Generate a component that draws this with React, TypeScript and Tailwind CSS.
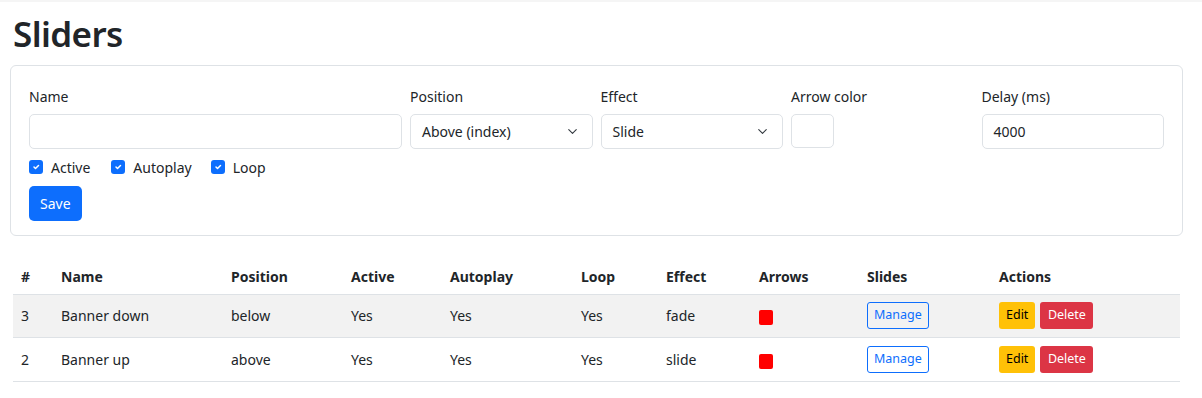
import { ChevronDown } from "lucide-react";

const rows = [
  { id: 3, name: "Banner down", position: "below", effect: "fade" },
  { id: 2, name: "Banner up", position: "above", effect: "slide" },
];

const cols = [
  { label: "#", w: "w-[40px]" },
  { label: "Name", w: "w-[170px]" },
  { label: "Position", w: "w-[120px]" },
  { label: "Active", w: "w-[99px]" },
  { label: "Autoplay", w: "w-[131px]" },
  { label: "Loop", w: "w-[85px]" },
  { label: "Effect", w: "w-[93px]" },
  { label: "Arrows", w: "w-[108px]" },
  { label: "Slides", w: "w-[132px]" },
  { label: "Actions", w: "w-[189px]" },
];

const Check = ({ label, className = "" }: { label: string; className?: string }) => (
  <label className={`flex items-center gap-[8px] ${className}`}>
    <span className="flex h-[14px] w-[14px] items-center justify-center rounded-[3px] bg-[#0d6efd]">
      <svg width="10" height="10" viewBox="0 0 20 20">
        <path
          d="M6 10l3 3 6-6"
          fill="none"
          stroke="#fff"
          strokeWidth="3"
          strokeLinecap="round"
          strokeLinejoin="round"
        />
      </svg>
    </span>
    <span>{label}</span>
  </label>
);

const Select = ({ value }: { value: string }) => (
  <div className="flex h-[35px] items-center justify-between rounded-[5px] border border-[#dee2e6] bg-white pl-[11px] pr-[12px]">
    <span>{value}</span>
    <ChevronDown size={15} strokeWidth={1.8} className="text-[#343a40]" />
  </div>
);

export default function App() {
  return (
    <div className="min-h-[398px] bg-white font-['Noto_Sans',sans-serif] text-[14px] text-[#212529]">
      <div className="h-[2px] bg-[#f5f5f5]" />

      <div className="pl-[10px] pr-[19px]">
        <h1 className="pl-[3px] pt-[11px] text-[35px] font-semibold leading-[1.2] tracking-[-0.6px] text-[#212529]">
          Sliders
        </h1>

        <div className="mt-[10px] rounded-[6px] border border-[#dee2e6] px-[18px] pb-[14px] pt-[20px]">
          <div className="grid grid-cols-12 gap-x-[8px]">
            <div className="col-span-4">
              <div className="mb-[7px] h-[21px] leading-[21px]">Name</div>
              <div className="h-[35px] rounded-[5px] border border-[#dee2e6]" />
            </div>
            <div className="col-span-2">
              <div className="mb-[7px] h-[21px] leading-[21px]">Position</div>
              <Select value="Above (index)" />
            </div>
            <div className="col-span-2">
              <div className="mb-[7px] h-[21px] leading-[21px]">Effect</div>
              <Select value="Slide" />
            </div>
            <div className="col-span-2">
              <div className="mb-[7px] h-[21px] leading-[21px]">Arrow color</div>
              <div className="h-[34px] w-[43px] rounded-[5px] border border-[#dee2e6]" />
            </div>
            <div className="col-span-2">
              <div className="mb-[7px] h-[21px] leading-[21px]">Delay (ms)</div>
              <div className="flex h-[35px] items-center rounded-[5px] border border-[#dee2e6] px-[11px]">
                4000
              </div>
            </div>
          </div>

          <div className="mt-[6px] flex h-[24px] items-center">
            <Check label="Active" />
            <Check label="Autoplay" className="ml-[21px]" />
            <Check label="Loop" className="ml-[19px]" />
          </div>

          <button className="mt-[7px] h-[35px] rounded-[5px] bg-[#0d6efd] px-[11px] text-white">
            Save
          </button>
        </div>

        <table className="ml-[3px] mt-[17px] w-[1167px] table-fixed border-collapse text-left">
          <thead>
            <tr className="h-[41px] border-b border-[#dee2e6]">
              {cols.map((c) => (
                <th key={c.label} className={`${c.w} px-[8px] pb-[7px] align-bottom font-bold`}>
                  {c.label}
                </th>
              ))}
            </tr>
          </thead>
          <tbody>
            {rows.map((r, i) => (
              <tr
                key={r.id}
                className={`border-b border-[#dee2e6] ${i === 0 ? "h-[43px] bg-[#f2f2f2]" : "h-[44px]"}`}
              >
                <td className="px-[8px]">{r.id}</td>
                <td className="px-[8px]">{r.name}</td>
                <td className="px-[8px]">{r.position}</td>
                <td className="px-[8px]">Yes</td>
                <td className="px-[8px]">Yes</td>
                <td className="px-[8px]">Yes</td>
                <td className="px-[8px]">{r.effect}</td>
                <td className="px-[8px]">
                  <span className="mt-[1px] inline-block h-[15px] w-[14px] rounded-[2px] bg-[#ff0000] align-middle" />
                </td>
                <td className="px-[8px]">
                  <button className="h-[27px] rounded-[3px] border border-[#0d6efd] px-[6px] text-[12.5px] text-[#0d6efd]">
                    Manage
                  </button>
                </td>
                <td className="px-[8px]">
                  <div className="flex gap-[5px]">
                    <button className="h-[27px] rounded-[3px] bg-[#ffc107] px-[7px] text-[12.5px] text-black">
                      Edit
                    </button>
                    <button className="h-[27px] rounded-[3px] bg-[#dc3545] px-[7.5px] text-[12.5px] text-white">
                      Delete
                    </button>
                  </div>
                </td>
              </tr>
            ))}
          </tbody>
        </table>
      </div>
    </div>
  );
}
